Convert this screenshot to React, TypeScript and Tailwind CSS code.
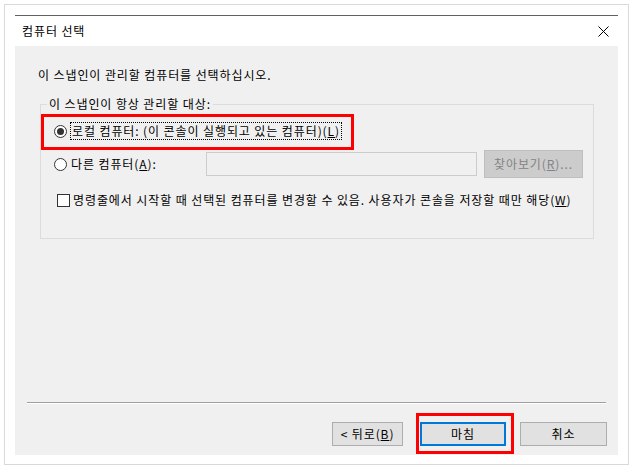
import React from "react";

const font = { fontFamily: '"Noto Sans CJK KR", "Noto Sans", sans-serif' };

function Radio({ checked }: { checked?: boolean }) {
  return (
    <span className="w-[13px] h-[13px] rounded-full border border-[#333333] bg-white flex items-center justify-center shrink-0">
      {checked && <span className="w-[7px] h-[7px] rounded-full bg-[#333333]" />}
    </span>
  );
}

export default function App() {
  return (
    <div className="w-[636px] h-[472px] bg-white pt-[4px] pl-[4px] tracking-[0.9px]" style={font}>
      <div className="w-[625px] h-[461px] border border-[#d9d9d9] bg-white pl-[10px] pt-[10px]">
        <div className="w-[603px] h-[440px] flex flex-col">
          <div className="h-[1px] bg-[#616161]" />
          <div className="h-[30px] bg-white flex items-center justify-between pl-[7px] pr-[8px]">
            <span className="text-[12px] leading-[16px] text-black">컴퓨터 선택</span>
            <svg width="11" height="11" viewBox="0 0 11 11" className="mr-[1px]">
              <path d="M0.5 0.5 L10.5 10.5 M10.5 0.5 L0.5 10.5" stroke="#000" strokeWidth="1" />
            </svg>
          </div>
          <div className="flex-1 bg-[#f0f0f0] flex flex-col text-[12px] text-black">
            <div className="mt-[21px] ml-[23px] h-[16px] leading-[16px]">이 스냅인이 관리할 컴퓨터를 선택하십시오.</div>
            <div className="relative mt-[21px] ml-[25px] w-[554px] h-[135px] border border-[#dcdcdc] flex flex-col">
              <span className="absolute left-[6px] -top-[9px] px-[2px] bg-[#f0f0f0] leading-[16px]">이 스냅인이 항상 관리할 대상:</span>
              <div className="absolute left-[0px] top-[9px] w-[313px] h-[36px] border-[3px] border-[#ff0000]" />
              <div className="mt-[17px] ml-[13px] h-[18px] flex items-center">
                <Radio checked />
                <span className="ml-[3px] h-[18px] px-[1px] leading-[16px] border border-dotted border-black">
                  로컬 컴퓨터: (이 콘솔이 실행되고 있는 컴퓨터)(<span className="underline">L</span>)
                </span>
              </div>
              <div className="mt-[10px] ml-[13px] h-[28px] flex items-center">
                <div className="w-[152px] flex items-center">
                  <Radio />
                  <span className="ml-[4px] leading-[16px]">
                    다른 컴퓨터(<span className="underline">A</span>):
                  </span>
                </div>
                <div className="w-[271px] h-[24px] border border-[#cccccc] bg-[#f0f0f0]" />
                <div className="ml-[7px] w-[99px] h-[28px] border border-[#bfbfbf] bg-[#cccccc] flex items-center justify-center text-[#838383] leading-[16px]">
                  찾아보기(<span className="underline">R</span>)...
                </div>
              </div>
              <div className="mt-[13px] ml-[16px] h-[18px] flex items-center">
                <span className="w-[13px] h-[13px] border border-[#333333] bg-white shrink-0" />
                <span className="ml-[3px] leading-[16px] whitespace-nowrap">
                  명령줄에서 시작할 때 선택된 컴퓨터를 변경할 수 있음. 사용자가 콘솔을 저장할 때만 해당(<span className="underline">W</span>)
                </span>
              </div>
            </div>
            <div className="mt-[163px] ml-[12px] w-[579px] h-[1px] bg-[#a0a0a0]" />
            <div className="ml-[12px] w-[579px] h-[1px] bg-white" />
            <div className="mt-[18px] flex">
              <div className="ml-[317px] w-[71px] h-[24px] border border-[#adadad] bg-[#e1e1e1] flex items-center justify-center leading-[16px]">
                &lt; 뒤로(<span className="underline">B</span>)
              </div>
              <div className="relative ml-[17px] w-[86px] h-[24px] border-2 border-[#0078d7] bg-[#e1e1e1] flex items-center justify-center leading-[16px]">
                마침
                <div className="absolute -left-[6px] -top-[11px] w-[98px] h-[41px] border-[3px] border-[#ff0000]" />
              </div>
              <div className="ml-[14px] w-[87px] h-[24px] border border-[#adadad] bg-[#e1e1e1] flex items-center justify-center leading-[16px]">
                취소
              </div>
            </div>
          </div>
        </div>
      </div>
    </div>
  );
}
